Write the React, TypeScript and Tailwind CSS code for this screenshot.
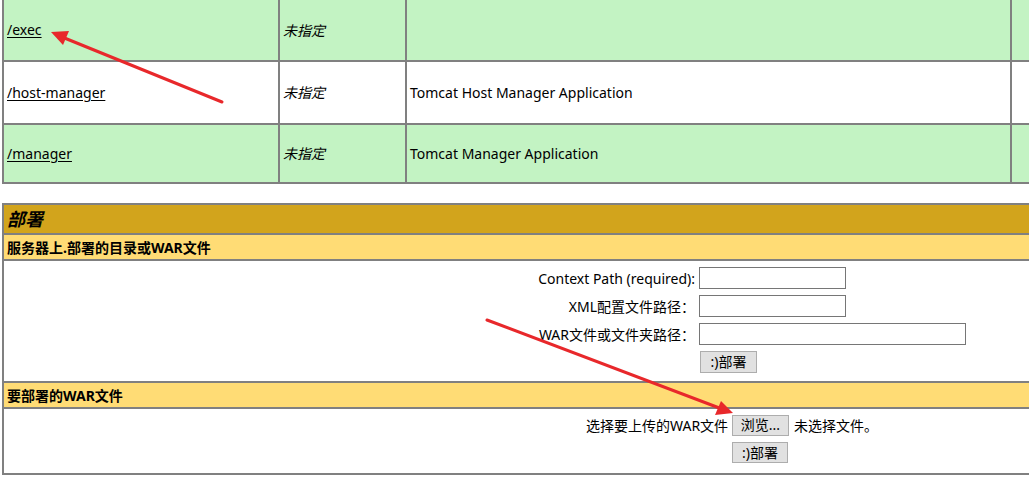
import { Fragment } from 'react';

const font = '[font-family:"Noto_Sans","Noto_Sans_CJK_SC",sans-serif]';

const apps = [
  { path: '/exec', version: '未指定', name: '', bg: 'bg-[#c3f3c3]', h: 'h-[61px]', first: true },
  { path: '/host-manager', version: '未指定', name: 'Tomcat Host Manager Application', bg: 'bg-white', h: 'h-[63px]', first: false },
  { path: '/manager', version: '未指定', name: 'Tomcat Manager Application', bg: 'bg-[#c3f3c3]', h: 'h-[59px]', first: false },
];

const fields = [
  { label: 'Context Path (required):', w: 'w-[147px]' },
  { label: 'XML配置文件路径：', w: 'w-[147px]' },
  { label: 'WAR文件或文件夹路径：', w: 'w-[267px]' },
];

function Arrows() {
  return (
    <svg className="absolute inset-0 pointer-events-none" width="1029" height="482" viewBox="0 0 1029 482">
      <g stroke="#e8282b" strokeWidth="3" strokeLinecap="round" fill="#e8282b">
        <line x1="222" y1="102" x2="62" y2="37" />
        <polygon points="51,32 69,31 63,45" stroke="none" />
        <line x1="487" y1="320" x2="722" y2="409" />
        <polygon points="733,413 715,415 721,401" stroke="none" />
      </g>
    </svg>
  );
}

export default function App() {
  return (
    <div className={`relative w-[1029px] h-[482px] overflow-hidden bg-white text-[14px] text-black ${font}`}>
      {/* applications table */}
      <div className="ml-[2px] w-[1060px] border-x border-b border-[#808080]">
        {apps.map((a) => (
          <div key={a.path} className={`flex ${a.h} ${a.bg}`}>
            <div className={`w-[276px] shrink-0 border border-[#808080] ${a.first ? 'border-t-0' : ''} flex items-center px-[3px]`}>
              <a className="underline underline-offset-2 leading-none">{a.path}</a>
            </div>
            <div className={`w-[127px] shrink-0 border border-[#808080] ${a.first ? 'border-t-0' : ''} flex items-center px-[3px] italic`}>
              {a.version}
            </div>
            <div className={`w-[605px] shrink-0 border border-[#808080] ${a.first ? 'border-t-0' : ''} flex items-center px-[3px]`}>
              {a.name}
            </div>
            <div className={`flex-1 border border-[#808080] ${a.first ? 'border-t-0' : ''}`} />
          </div>
        ))}
      </div>

      {/* deploy table */}
      <div className="mt-[19px] ml-[2px] w-[1060px] border border-[#808080] flex flex-col">
        <div className="h-[30px] border border-[#808080] bg-[#d2a41c] flex items-center px-[3px] text-[18px] font-bold italic">
          部署
        </div>
        <div className="h-[26px] border border-[#808080] bg-[#ffdc75] flex items-center px-[3px] font-bold">
          服务器上.部署的目录或WAR文件
        </div>
        <div className="h-[122px] border border-[#808080] bg-white pt-[6px]">
          <div className="ml-[535px] grid grid-cols-[160px_auto] gap-y-[6px] items-center">
            {fields.map((f) => (
              <Fragment key={f.label}>
                <div className="flex justify-end pr-[4px] whitespace-nowrap">
                  <span>{f.label}</span>
                </div>
                <input className={`${f.w} h-[22px] border border-[#767676] bg-white`} />
              </Fragment>
            ))}
            <div />
            <button className="ml-[1px] w-[57px] h-[22px] border border-[#adadad] bg-[#e1e1e1] leading-none">:)部署</button>
          </div>
        </div>
        <div className="h-[26px] border border-[#808080] bg-[#ffdc75] flex items-center px-[3px] font-bold">
          要部署的WAR文件
        </div>
        <div className="h-[66px] border border-[#808080] bg-white pt-[5px] flex flex-col">
          <div className="flex items-center h-[22px]">
            <span className="ml-[582px] w-[144px] whitespace-nowrap">选择要上传的WAR文件</span>
            <button className="ml-[2px] w-[57px] h-[21px] border border-[#adadad] bg-[#e1e1e1] leading-none">浏览...</button>
            <span className="ml-[5px]">未选择文件。</span>
          </div>
          <button className="mt-[6px] ml-[728px] w-[56px] h-[21px] border border-[#adadad] bg-[#e1e1e1] leading-none">:)部署</button>
        </div>
      </div>

      <Arrows />
    </div>
  );
}
